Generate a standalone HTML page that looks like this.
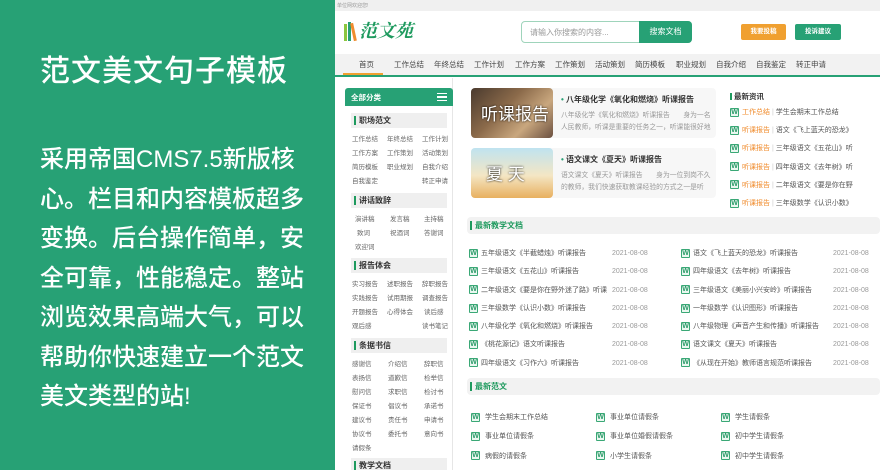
<!DOCTYPE html>
<html style="width:880px;height:470px;overflow:hidden"><head><meta charset="utf-8"><style>
*{margin:0;padding:0;box-sizing:border-box}
body{width:880px;height:470px;overflow:hidden;position:relative;background:#fff;font-family:"Liberation Sans","Noto Sans CJK SC",sans-serif;color:#444}
.a{position:absolute;white-space:nowrap}
#left{position:absolute;left:0;top:0;width:333px;height:470px;background:#27a175;color:#fff}
#left h1{position:absolute;left:40px;top:46px;font-size:30px;font-weight:500;letter-spacing:1px}
#left p{position:absolute;left:40px;top:140px;width:270px;font-size:24px;line-height:39.5px;font-weight:500}
.s{font-size:7.5px;color:#555}
.w{display:inline-block;width:9px;height:9px;border:1px solid #3aa876;color:#2a9a68;font-size:7px;line-height:7px;text-align:center;font-weight:bold;border-radius:1px;vertical-align:middle;margin-right:3px;background:#eaf7f0}
.bar{position:absolute;background:#f2f2f2;border-radius:4px;height:17px}
.bar b{position:absolute;left:3px;top:4px;width:2px;height:9px;background:#1e9a5e}
.bar span{position:absolute;left:8px;top:3px;font-size:8px;font-weight:bold;color:#1e9a5e}
.sh{position:absolute;left:351px;width:96px;height:15px;background:#efefef}
.sh b{position:absolute;left:3px;top:3px;width:2px;height:9px;background:#1e9a5e}
.sh span{position:absolute;left:8px;top:2px;font-size:8px;font-weight:bold;color:#333}
.si{position:absolute;font-size:6.5px;color:#666}
.dt{font-size:7px;color:#999}
</style></head><body>
<div id="left">
<h1>范文美文句子模板</h1>
<p>采用帝国CMS7.5新版核心。栏目和内容模板超多变换。后台操作简单，安全可靠，性能稳定。整站浏览效果高端大气，可以帮助你快速建立一个范文美文类型的站!</p>
</div>
<div class="a" style="left:333px;top:0;width:2px;height:470px;background:#27a175;z-index:5"></div>
<div class="a" style="left:333px;top:0;width:547px;height:11px;background:#f0f0f0"></div>
<div class="a" style="left:337px;top:2px;font-size:5px;color:#999">单位网欢迎您!</div>
<!-- logo -->
<div class="a" style="left:344px;top:24px;width:3px;height:17px;background:#8cc63f"></div>
<div class="a" style="left:348px;top:22px;width:3px;height:19px;background:#27a175"></div>
<div class="a" style="left:352px;top:23px;width:3px;height:18px;background:#f08c2e;transform:rotate(-12deg)"></div>
<div class="a" style="left:359px;top:17px;font-size:18px;color:#1e9a5e;font-style:italic;font-weight:bold;font-family:'Noto Serif CJK SC',serif">范文苑</div>
<!-- search -->
<div class="a" style="left:521px;top:21px;width:171px;height:22px;border:1px solid #9fd4bb;border-radius:4px"></div>
<div class="a" style="left:530px;top:27px;font-size:8px;color:#999">请输入你搜索的内容...</div>
<div class="a" style="left:639px;top:21px;width:53px;height:22px;background:#27a175;border-radius:0 4px 4px 0;color:#fff;font-size:8px;text-align:center;line-height:22px">搜索文档</div>
<div class="a" style="left:741px;top:24px;width:45px;height:16px;background:#f0a030;border-radius:2px;color:#fff;font-size:6.5px;text-align:center;line-height:16px;font-weight:bold">我要投稿</div>
<div class="a" style="left:795px;top:24px;width:46px;height:16px;background:#27a175;border-radius:2px;color:#fff;font-size:6.5px;text-align:center;line-height:16px;font-weight:bold">投诉建议</div>
<!-- nav -->
<div class="a" style="left:333px;top:54px;width:547px;height:21px;background:#f2f2f2"></div>
<div class="a" style="left:333px;top:75px;width:547px;height:2px;background:#27a175"></div>
<div class="a" style="left:343px;top:73px;width:40px;height:2px;background:#f0a030"></div>
<div class="a" style="left:333px;top:59px;width:547px;font-size:7.5px;color:#444">
<span class="a" style="left:26px">首页</span><span class="a" style="left:61px">工作总结</span><span class="a" style="left:101px">年终总结</span><span class="a" style="left:141px">工作计划</span><span class="a" style="left:182px">工作方案</span><span class="a" style="left:222px">工作策划</span><span class="a" style="left:262px">活动策划</span><span class="a" style="left:302px">简历模板</span><span class="a" style="left:343px">职业规划</span><span class="a" style="left:383px">自我介绍</span><span class="a" style="left:423px">自我鉴定</span><span class="a" style="left:463px">转正申请</span></div>
<!-- sidebar -->
<div class="a" style="left:452px;top:78px;width:1px;height:392px;background:#e6e6e6"></div>
<div class="a" style="left:345px;top:88px;width:108px;height:18px;background:#27a175;border-radius:3px 3px 0 0"></div>
<div class="a" style="left:351px;top:92px;font-size:7.5px;color:#fff;font-weight:bold">全部分类</div>
<div class="a" style="left:437px;top:93px;width:10px;height:8px;border-top:1.5px solid #fff;border-bottom:1.5px solid #fff"></div>
<div class="a" style="left:437px;top:96px;width:10px;height:1.5px;background:#fff"></div>
<div class="sh" style="top:113px"><b></b><span>职场范文</span></div>
<div class="si" style="left:352px;top:133px">工作总结</div><div class="si" style="left:387px;top:133px">年终总结</div><div class="si" style="left:422px;top:133px">工作计划</div>
<div class="si" style="left:352px;top:147px">工作方案</div><div class="si" style="left:387px;top:147px">工作策划</div><div class="si" style="left:422px;top:147px">活动策划</div>
<div class="si" style="left:352px;top:161px">简历模板</div><div class="si" style="left:387px;top:161px">职业规划</div><div class="si" style="left:422px;top:161px">自我介绍</div>
<div class="si" style="left:352px;top:175px">自我鉴定</div><div class="si" style="left:422px;top:175px">转正申请</div>
<div class="sh" style="top:193px"><b></b><span>讲话致辞</span></div>
<div class="si" style="left:355px;top:213px">演讲稿</div><div class="si" style="left:390px;top:213px">发言稿</div><div class="si" style="left:424px;top:213px">主持稿</div>
<div class="si" style="left:357px;top:227px">致词</div><div class="si" style="left:390px;top:227px">祝酒词</div><div class="si" style="left:424px;top:227px">答谢词</div>
<div class="si" style="left:355px;top:241px">欢迎词</div>
<div class="sh" style="top:258px"><b></b><span>报告体会</span></div>
<div class="si" style="left:352px;top:278px">实习报告</div><div class="si" style="left:387px;top:278px">述职报告</div><div class="si" style="left:422px;top:278px">辞职报告</div>
<div class="si" style="left:352px;top:292px">实践报告</div><div class="si" style="left:387px;top:292px">试用期报</div><div class="si" style="left:422px;top:292px">调查报告</div>
<div class="si" style="left:352px;top:306px">开题报告</div><div class="si" style="left:387px;top:306px">心得体会</div><div class="si" style="left:424px;top:306px">读后感</div>
<div class="si" style="left:352px;top:320px">观后感</div><div class="si" style="left:422px;top:320px">读书笔记</div>
<div class="sh" style="top:338px"><b></b><span>条据书信</span></div>
<div class="si" style="left:352px;top:358px">感谢信</div><div class="si" style="left:388px;top:358px">介绍信</div><div class="si" style="left:424px;top:358px">辞职信</div>
<div class="si" style="left:352px;top:372px">表扬信</div><div class="si" style="left:388px;top:372px">道歉信</div><div class="si" style="left:424px;top:372px">检举信</div>
<div class="si" style="left:352px;top:386px">慰问信</div><div class="si" style="left:388px;top:386px">求职信</div><div class="si" style="left:424px;top:386px">检讨书</div>
<div class="si" style="left:352px;top:400px">保证书</div><div class="si" style="left:388px;top:400px">倡议书</div><div class="si" style="left:424px;top:400px">承诺书</div>
<div class="si" style="left:352px;top:414px">建议书</div><div class="si" style="left:388px;top:414px">责任书</div><div class="si" style="left:424px;top:414px">申请书</div>
<div class="si" style="left:352px;top:428px">协议书</div><div class="si" style="left:388px;top:428px">委托书</div><div class="si" style="left:424px;top:428px">意向书</div>
<div class="si" style="left:352px;top:442px">请假条</div>
<div class="sh" style="top:458px;height:12px"><b></b><span>教学文档</span></div>
<!-- featured -->
<div class="a" style="left:471px;top:88px;width:245px;height:50px;background:#f7f7f7;border-radius:4px"></div>
<div class="a" style="left:471px;top:88px;width:82px;height:50px;border-radius:4px;background:linear-gradient(135deg,#4a3a2e,#8b6a4a 40%,#c9a77e 70%,#6b5040)"></div>
<div class="a" style="left:481px;top:100px;font-size:17px;color:#fff;text-shadow:0 0 2px #000">听课报告</div>
<div class="a" style="left:561px;top:94px;font-size:8px;font-weight:bold;color:#333"><span style="color:#27a175">•</span> 八年级化学《氧化和燃烧》听课报告</div>
<div class="a s" style="left:561px;top:110px;color:#999;font-size:6.8px;line-height:12px">八年级化学《氧化和燃烧》听课报告　　身为一名<br>人民教师，听课是重要的任务之一，听课能很好地</div>
<div class="a" style="left:471px;top:148px;width:245px;height:50px;background:#f7f7f7;border-radius:4px"></div>
<div class="a" style="left:471px;top:148px;width:82px;height:50px;border-radius:4px;background:linear-gradient(180deg,#bfe3f0,#f4e6c4 55%,#e8b060)"></div>
<div class="a" style="left:486px;top:160px;font-size:17px;color:#fff;text-shadow:0 0 2px #000">夏 天</div>
<div class="a" style="left:561px;top:154px;font-size:8px;font-weight:bold;color:#333"><span style="color:#27a175">•</span> 语文课文《夏天》听课报告</div>
<div class="a s" style="left:561px;top:170px;color:#999;font-size:6.8px;line-height:12px">语文课文《夏天》听课报告　　身为一位到岗不久<br>的教师，我们快速获取教课经验的方式之一是听</div>
<!-- latest news -->
<div class="a" style="left:730px;top:93px;width:2px;height:7px;background:#1e9a5e"></div>
<div class="a" style="left:734px;top:91px;font-size:7.5px;font-weight:bold;color:#333">最新资讯</div>
<div class="a s" style="left:730px;top:104px;line-height:18.2px;font-size:7px">
<div><span class="w">W</span><span style="color:#f08c2e">工作总结</span> <span style="color:#ccc">|</span> 学生会期末工作总结</div>
<div><span class="w">W</span><span style="color:#f08c2e">听课报告</span> <span style="color:#ccc">|</span> 语文《飞上蓝天的恐龙》</div>
<div><span class="w">W</span><span style="color:#f08c2e">听课报告</span> <span style="color:#ccc">|</span> 三年级语文《五花山》听</div>
<div><span class="w">W</span><span style="color:#f08c2e">听课报告</span> <span style="color:#ccc">|</span> 四年级语文《去年树》听</div>
<div><span class="w">W</span><span style="color:#f08c2e">听课报告</span> <span style="color:#ccc">|</span> 二年级语文《要是你在野</div>
<div><span class="w">W</span><span style="color:#f08c2e">听课报告</span> <span style="color:#ccc">|</span> 三年级数学《认识小数》</div>
</div>
<!-- teaching docs -->
<div class="bar" style="left:467px;top:217px;width:413px"><b></b><span>最新教学文档</span></div>
<div class="a s" style="left:469px;top:245px;line-height:18.3px;font-size:7px">
<div><span class="w">W</span>五年级语文《半截蜡烛》听课报告</div>
<div><span class="w">W</span>三年级语文《五花山》听课报告</div>
<div><span class="w">W</span>二年级语文《要是你在野外迷了路》听课</div>
<div><span class="w">W</span>三年级数学《认识小数》听课报告</div>
<div><span class="w">W</span>八年级化学《氧化和燃烧》听课报告</div>
<div><span class="w">W</span>《桃花源记》语文听课报告</div>
<div><span class="w">W</span>四年级语文《习作六》听课报告</div>
</div>
<div class="a dt" style="left:612px;top:245px;line-height:18.3px">2021-08-08<br>2021-08-08<br>2021-08-08<br>2021-08-08<br>2021-08-08<br>2021-08-08<br>2021-08-08</div>
<div class="a s" style="left:681px;top:245px;line-height:18.3px;font-size:7px">
<div><span class="w">W</span>语文《飞上蓝天的恐龙》听课报告</div>
<div><span class="w">W</span>四年级语文《去年树》听课报告</div>
<div><span class="w">W</span>三年级语文《美丽小兴安岭》听课报告</div>
<div><span class="w">W</span>一年级数学《认识图形》听课报告</div>
<div><span class="w">W</span>八年级物理《声音产生和传播》听课报告</div>
<div><span class="w">W</span>语文课文《夏天》听课报告</div>
<div><span class="w">W</span>《从现在开始》教师语言规范听课报告</div>
</div>
<div class="a dt" style="left:833px;top:245px;line-height:18.3px">2021-08-08<br>2021-08-08<br>2021-08-08<br>2021-08-08<br>2021-08-08<br>2021-08-08<br>2021-08-08</div>
<!-- latest essays -->
<div class="bar" style="left:467px;top:378px;width:413px"><b></b><span>最新范文</span></div>
<div class="a s" style="left:471px;top:408px;line-height:19.3px;font-size:7px">
<div><span class="w">W</span> 学生会期末工作总结</div><div><span class="w">W</span> 事业单位请假条</div><div><span class="w">W</span> 病假的请假条</div></div>
<div class="a s" style="left:596px;top:408px;line-height:19.3px;font-size:7px">
<div><span class="w">W</span> 事业单位请假条</div><div><span class="w">W</span> 事业单位婚假请假条</div><div><span class="w">W</span> 小学生请假条</div></div>
<div class="a s" style="left:721px;top:408px;line-height:19.3px;font-size:7px">
<div><span class="w">W</span> 学生请假条</div><div><span class="w">W</span> 初中学生请假条</div><div><span class="w">W</span> 初中学生请假条</div></div>
</body></html>
